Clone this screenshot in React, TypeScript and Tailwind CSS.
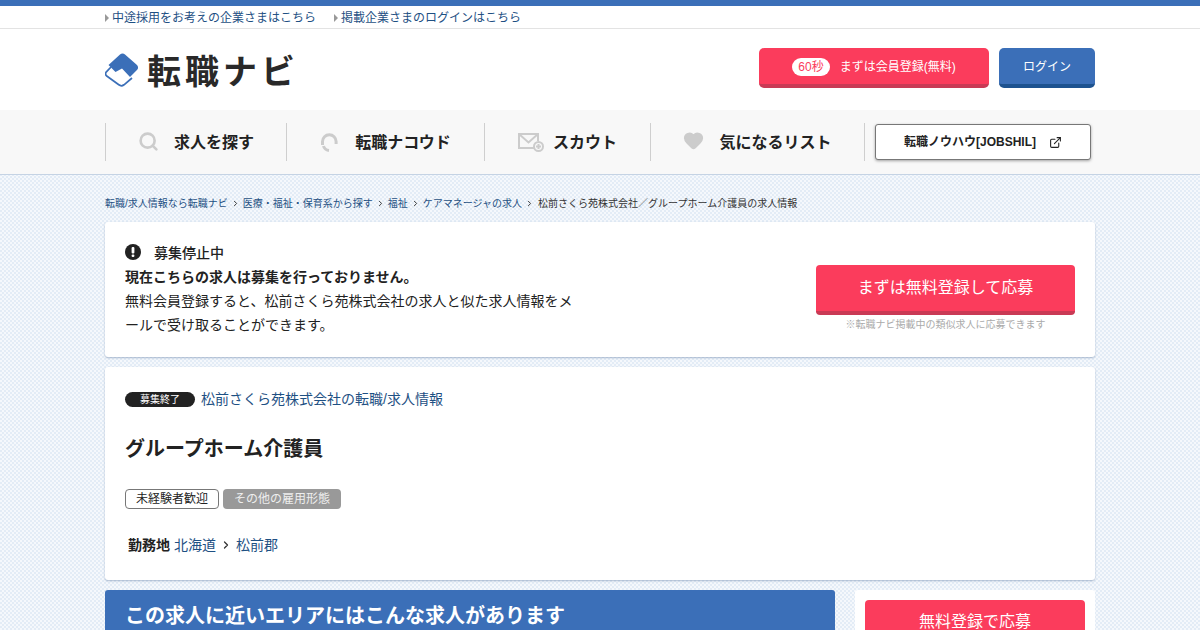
import { ChevronRight, ExternalLink, Heart, Search } from "lucide-react";

const jp = "font-['Liberation_Sans','Noto_Sans_CJK_JP',sans-serif]";

const crumbs = [
  "転職/求人情報なら転職ナビ",
  "医療・福祉・保育系から探す",
  "福祉",
  "ケアマネージャの求人",
];

const Logo = () => (
  <div className="flex items-center">
    <svg width="34" height="34" viewBox="0 0 34 34">
      <path d="M6 14 1.4 18.8C.4 20 .4 21.6 1.4 22.8L13.8 31.8C15.4 33 17.4 33 19 31.8L27 25" fill="#fff" stroke="#3b6fb8" strokeWidth="1.7" strokeLinejoin="round" />
      <path d="M15 1.5C16.6.2 18.6.2 20 1.5L32 12C33.4 13.4 33.4 15.4 32.2 16.8L25 24 17 15.5 10.5 19 3.5 12Z" fill="#3b6fb8" />
    </svg>
    <span className="ml-[8px] font-['Noto_Sans_CJK_JP',sans-serif] text-[34px] leading-none font-bold tracking-[4px] text-[#292929]">
      転職ナビ
    </span>
  </div>
);

const NavItem = ({ icon, label, width, gap }: { icon: React.ReactNode; label: string; width: string; gap: string }) => (
  <div className={`flex h-[38px] items-center justify-center border-l border-[#cfcfcf] ${width} ${gap}`}>
    {icon}
    <span className="pt-[1px] text-[16px] font-bold whitespace-nowrap text-[#222]">{label}</span>
  </div>
);

const App = () => {
  return (
    <div className={`h-[630px] w-[1200px] overflow-hidden bg-[#e9f0f8] bg-[conic-gradient(#e3ecf6_25%,#f5f8fc_0_50%,#e3ecf6_0_75%,#f5f8fc_0)] bg-[length:4px_4px] ${jp}`}>
      <div className="h-[6px] bg-[#3b6fb8]" />
      <div className="h-[23px] border-b border-[#e3e3e3] bg-white">
        <div className="mx-auto flex w-[990px] items-center pt-[4px] text-[12px] leading-[16px] text-[#1e5083]">
          <span className="mr-[3px] h-0 w-0 border-y-[4px] border-l-[4px] border-y-transparent border-l-[#999]" />
          <span>中途採用をお考えの企業さまはこちら</span>
          <span className="mr-[3px] ml-[18px] h-0 w-0 border-y-[4px] border-l-[4px] border-y-transparent border-l-[#999]" />
          <span>掲載企業さまのログインはこちら</span>
        </div>
      </div>

      <div className="bg-white">
        <div className="mx-auto flex h-[81px] w-[990px] items-center justify-between">
          <Logo />
          <div className="-mt-[3px] flex gap-[10px]">
            <div className="flex h-[40px] w-[230px] items-center justify-center rounded-[5px] border-b-[4px] border-[#c93a55] bg-[#fb3c5c] pt-[1px] text-[12px] text-white">
              <span className="mr-[10px] rounded-full bg-white px-[6px] text-[12px] leading-[18px] text-[#fb3c5c]">60秒</span>
              まずは会員登録(無料)
            </div>
            <div className="flex h-[40px] w-[96px] items-center justify-center rounded-[5px] border-b-[4px] border-[#1d528f] bg-[#3b6fb8] pt-[1px] text-[12px] text-white">
              ログイン
            </div>
          </div>
        </div>
      </div>

      <div className="h-[65px] border-b border-[#c5d3e4] bg-[#f8f8f8]">
        <div className="mx-auto flex h-full w-[990px] items-center">
          <NavItem width="w-[181px]" gap="gap-[15px]" label="求人を探す" icon={<Search size={21} strokeWidth={3} className="-translate-y-[1px] text-[#ccc]" />} />
          <NavItem width="w-[198px]" gap="gap-[17px]" label="転職ナコウド" icon={
            <svg width="18" height="20" viewBox="0 0 18 20" fill="none" stroke="#ccc" strokeWidth="3">
              <path d="M2.5 13V9.5a6.8 6.8 0 0 1 13.6 0v2.5" />
              <path d="M3.5 14c.6 2.4 2.4 4 5.5 4.4" />
            </svg>
          } />
          <NavItem width="w-[166px]" gap="gap-[9px]" label="スカウト" icon={
            <svg width="26" height="19" viewBox="0 0 26 19" fill="none" stroke="#ccc" strokeWidth="2">
              <path d="M16 15H1V1h19v7" />
              <path d="m1 1 9.5 8.5L20 1" />
              <circle cx="20.5" cy="13.5" r="4.5" />
              <path d="M20.5 11v5M18 13.5h5" />
            </svg>
          } />
          <NavItem width="w-[214px]" gap="gap-[15px]" label="気になるリスト" icon={<Heart size={21} fill="#ccc" className="-translate-y-[2px] text-[#ccc]" />} />
          <div className="h-[38px] border-l border-[#cfcfcf]" />
          <div className="ml-[10px] flex h-[36px] w-[216px] items-center justify-center gap-[13px] rounded-[3px] border border-[#777] bg-white text-[12px] font-bold text-[#222] shadow-[0_1px_3px_rgba(0,0,0,0.35)]">
            転職ノウハウ[JOBSHIL]
            <ExternalLink size={13} strokeWidth={2} />
          </div>
        </div>
      </div>

      <div className="mx-auto w-[990px]">
        <div className="flex h-[47px] items-center pt-[9px] text-[10px] text-[#1e5083]">
          {crumbs.map((c) => (
            <span key={c} className="flex items-center">
              {c}
              <ChevronRight size={9} strokeWidth={2.5} className="mx-[3px] text-[#333]" />
            </span>
          ))}
          <span className="ml-[1px] text-[#333]">松前さくら苑株式会社／グループホーム介護員の求人情報</span>
        </div>

        <div className="flex h-[135px] items-center justify-between rounded-[3px] bg-white px-[20px] shadow-[0_1px_2px_rgba(80,110,150,0.45)]">
          <div className="w-[450px] pb-[2px] text-[14px] leading-[24px] text-[#222]">
            <p className="flex items-center font-medium">
              <svg width="16" height="16" viewBox="0 0 16 16" className="mr-[13px] -translate-y-[1px]">
                <circle cx="8" cy="8" r="8" fill="#222" />
                <rect x="6.6" y="3" width="2.8" height="6.5" rx="1" fill="#fff" />
                <rect x="6.6" y="10.5" width="2.8" height="2.6" rx="1" fill="#fff" />
              </svg>
              募集停止中
            </p>
            <p className="font-bold">現在こちらの求人は募集を行っておりません。</p>
            <p>無料会員登録すると、松前さくら苑株式会社の求人と似た求人情報をメールで受け取ることができます。</p>
          </div>
          <div className="w-[259px] pt-[18px]">
            <div className="flex h-[50px] items-center justify-center rounded-[4px] border-b-[4px] border-[#c93a55] bg-[#fb3c5c] text-[16px] text-white">
              まずは無料登録して応募
            </div>
            <p className="mt-[3px] text-center text-[10px] leading-[14px] text-[#aaa]">※転職ナビ掲載中の類似求人に応募できます</p>
          </div>
        </div>

        <div className="mt-[10px] h-[213px] rounded-[3px] bg-white px-[20px] pt-[22px] shadow-[0_1px_2px_rgba(80,110,150,0.45)]">
          <div className="flex h-[20px] items-center">
            <span className="flex h-[15px] w-[70px] items-center justify-center rounded-full bg-[#222] text-[10px] text-white">募集終了</span>
            <span className="ml-[6px] text-[14px] text-[#1e5083]">松前さくら苑株式会社の転職/求人情報</span>
          </div>
          <h1 className="mt-[25px] text-[20px] leading-[30px] font-bold text-[#222]">グループホーム介護員</h1>
          <div className="mt-[25px] flex gap-[4px] text-[12px]">
            <span className="flex h-[20px] w-[94px] items-center justify-center rounded-[4px] border border-[#777] text-[#222]">未経験者歓迎</span>
            <span className="flex h-[20px] w-[118px] items-center justify-center rounded-[4px] bg-[#999] text-[#eee]">その他の雇用形態</span>
          </div>
          <div className="mt-[26px] flex items-center pl-[3px] text-[14px] leading-[20px] text-[#1e5083]">
            <span className="mr-[4px] font-bold text-[#222]">勤務地</span>
            北海道
            <ChevronRight size={12} strokeWidth={2.5} className="mx-[4px] text-[#333]" />
            松前郡
          </div>
        </div>

        <div className="mt-[10px] flex items-start gap-[20px]">
          <div className="h-[60px] w-[730px] rounded-[3px] bg-[#3b6fb8] px-[20px] pt-[11px] text-[20px] leading-[30px] font-bold text-white">
            この求人に近いエリアにはこんな求人があります
          </div>
          <div className="h-[60px] w-[240px] rounded-[3px] bg-white px-[10px] pt-[10px]">
            <div className="h-[50px] rounded-[4px] bg-[#fb3c5c] pt-[7px] text-center text-[16px] leading-[30px] text-white">無料登録で応募</div>
          </div>
        </div>
      </div>
    </div>
  );
};

export default App;
